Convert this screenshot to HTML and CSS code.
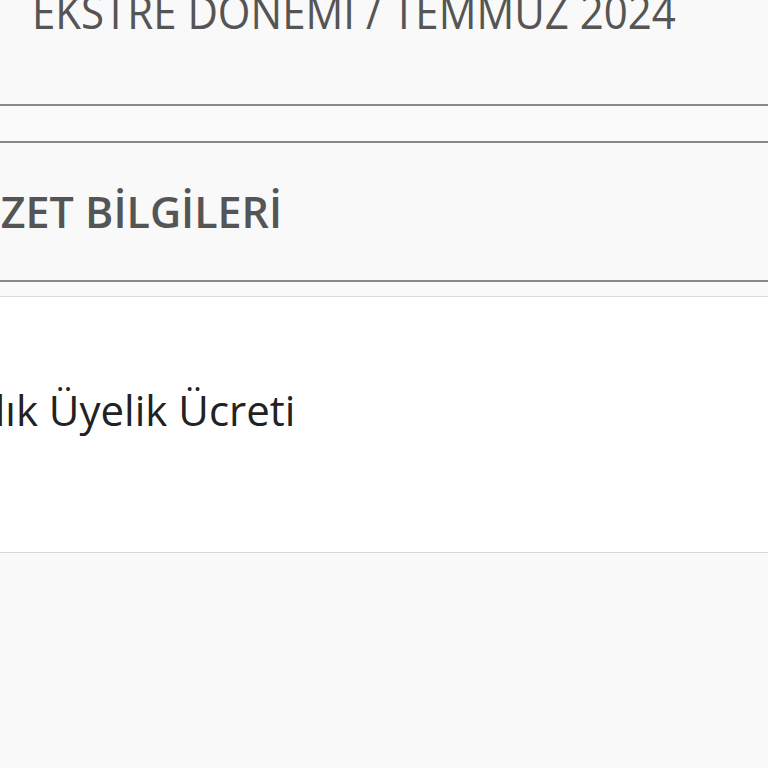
FILE: index.html
```html
<!DOCTYPE html>
<html lang="tr">
<head>
    <meta charset="UTF-8">
    <meta name="viewport" content="width=device-width, initial-scale=1.0">
    <title>Ekstre Özeti</title>
    <link rel="stylesheet" href="styles.css">
</head>
<body>
    <div class="page">
        <div class="period">
            <span class="period-text">EKSTRE DÖNEMİ / TEMMUZ 2024</span>
        </div>

        <div class="gap"></div>

        <div class="section-head">
            <h2 class="section-title">ÖZET BİLGİLERİ</h2>
        </div>

        <div class="strip"></div>

        <div class="row">
            <span class="row-label">Yıllık Üyelik Ücreti</span>
        </div>

        <div class="rest"></div>
    </div>
</body>
</html>
```

FILE: styles.css
```css
body, html {
    margin: 0;
    padding: 0;
    height: 100%;
    overflow: hidden;
    background-color: #f9f9f9;
}

.page {
    font-family: "Open Sans", Arial, sans-serif;
}

.period {
    height: 104px;
    border-bottom: 2px solid #8a8a8a;
    background-color: #f9f9f9;
    overflow: hidden;
}

.period-text {
    display: block;
    margin-top: -17px;
    padding-left: 32px;
    font-size: 42px;
    font-weight: 400;
    line-height: 60px;
    color: #555;
    white-space: nowrap;
    transform: scaleY(1.08);
    transform-origin: 0 46px;
}

.gap {
    height: 35px;
    background-color: #fafafa;
}

.section-head {
    height: 137px;
    border-top: 2px solid #8a8a8a;
    border-bottom: 2px solid #8a8a8a;
    background-color: #f9f9f9;
    display: flex;
    align-items: center;
    overflow: hidden;
}

.section-title {
    margin: 0 0 0 -33px;
    font-size: 43px;
    font-weight: 600;
    color: #555;
    white-space: nowrap;
}

.strip {
    height: 14px;
    border-bottom: 1px solid #dcdcdc;
    background-color: #f9f9f9;
}

.row {
    height: 225px;
    padding-bottom: 30px;
    border-bottom: 1px solid #d8d8d8;
    background-color: #fff;
    display: flex;
    align-items: center;
    overflow: hidden;
}

.row-label {
    margin-left: -50px;
    font-size: 42px;
    font-weight: 400;
    color: #222;
    white-space: nowrap;
}

.rest {
    height: 300px;
    background-color: #f9f9f9;
}
```
